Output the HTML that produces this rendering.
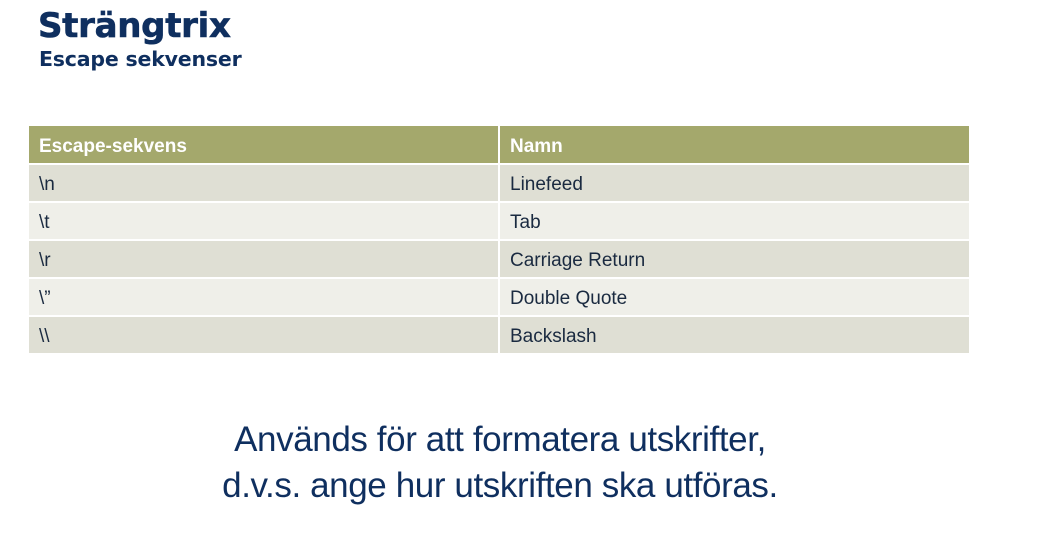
<!DOCTYPE html>
<html><head><meta charset="utf-8"><style>
body{margin:0;width:1054px;height:554px;background:#fff;position:relative;overflow:hidden;font-family:"Liberation Sans",sans-serif}
.t1{position:absolute;left:38px;top:6px;font-family:"DejaVu Sans",sans-serif;font-weight:bold;font-size:34px;color:#0f2f5f;letter-spacing:-0.3px;-webkit-text-stroke:0.6px #0f2f5f}
.t2{position:absolute;left:39px;top:47px;font-family:"DejaVu Sans",sans-serif;font-weight:bold;font-size:20.5px;color:#0f2f5f;letter-spacing:-0.2px}
table{position:absolute;left:29px;top:126px;width:940px;border-collapse:collapse}
td{height:36px;padding:4px 0 0 10px;box-sizing:border-box;font-size:19px;color:#1a2a40;border:2px solid #fff;border-top:0}
td:first-child{border-left:0;width:470px}
td:last-child{border-right:0}
tr.h td{background:#a4a86c;color:#fff;font-weight:bold;height:38px}
tr.a td{background:#dfdfd4;height:38px}
tr.b td{background:#efefe9;height:38px}
.bot{position:absolute;left:0;width:1000px;text-align:center;top:417px;font-size:35px;line-height:46px;color:#0f2f5f;letter-spacing:-0.4px}
</style></head><body>
<div class="t1">Strängtrix</div>
<div class="t2">Escape sekvenser</div>
<table>
<tr class="h"><td>Escape-sekvens</td><td>Namn</td></tr>
<tr class="a"><td>\n</td><td>Linefeed</td></tr>
<tr class="b"><td>\t</td><td>Tab</td></tr>
<tr class="a"><td>\r</td><td>Carriage Return</td></tr>
<tr class="b"><td>\”</td><td>Double Quote</td></tr>
<tr class="a"><td>\\</td><td>Backslash</td></tr>
</table>
<div class="bot">Används för att formatera utskrifter,<br>d.v.s. ange hur utskriften ska utföras.</div>
</body></html>
